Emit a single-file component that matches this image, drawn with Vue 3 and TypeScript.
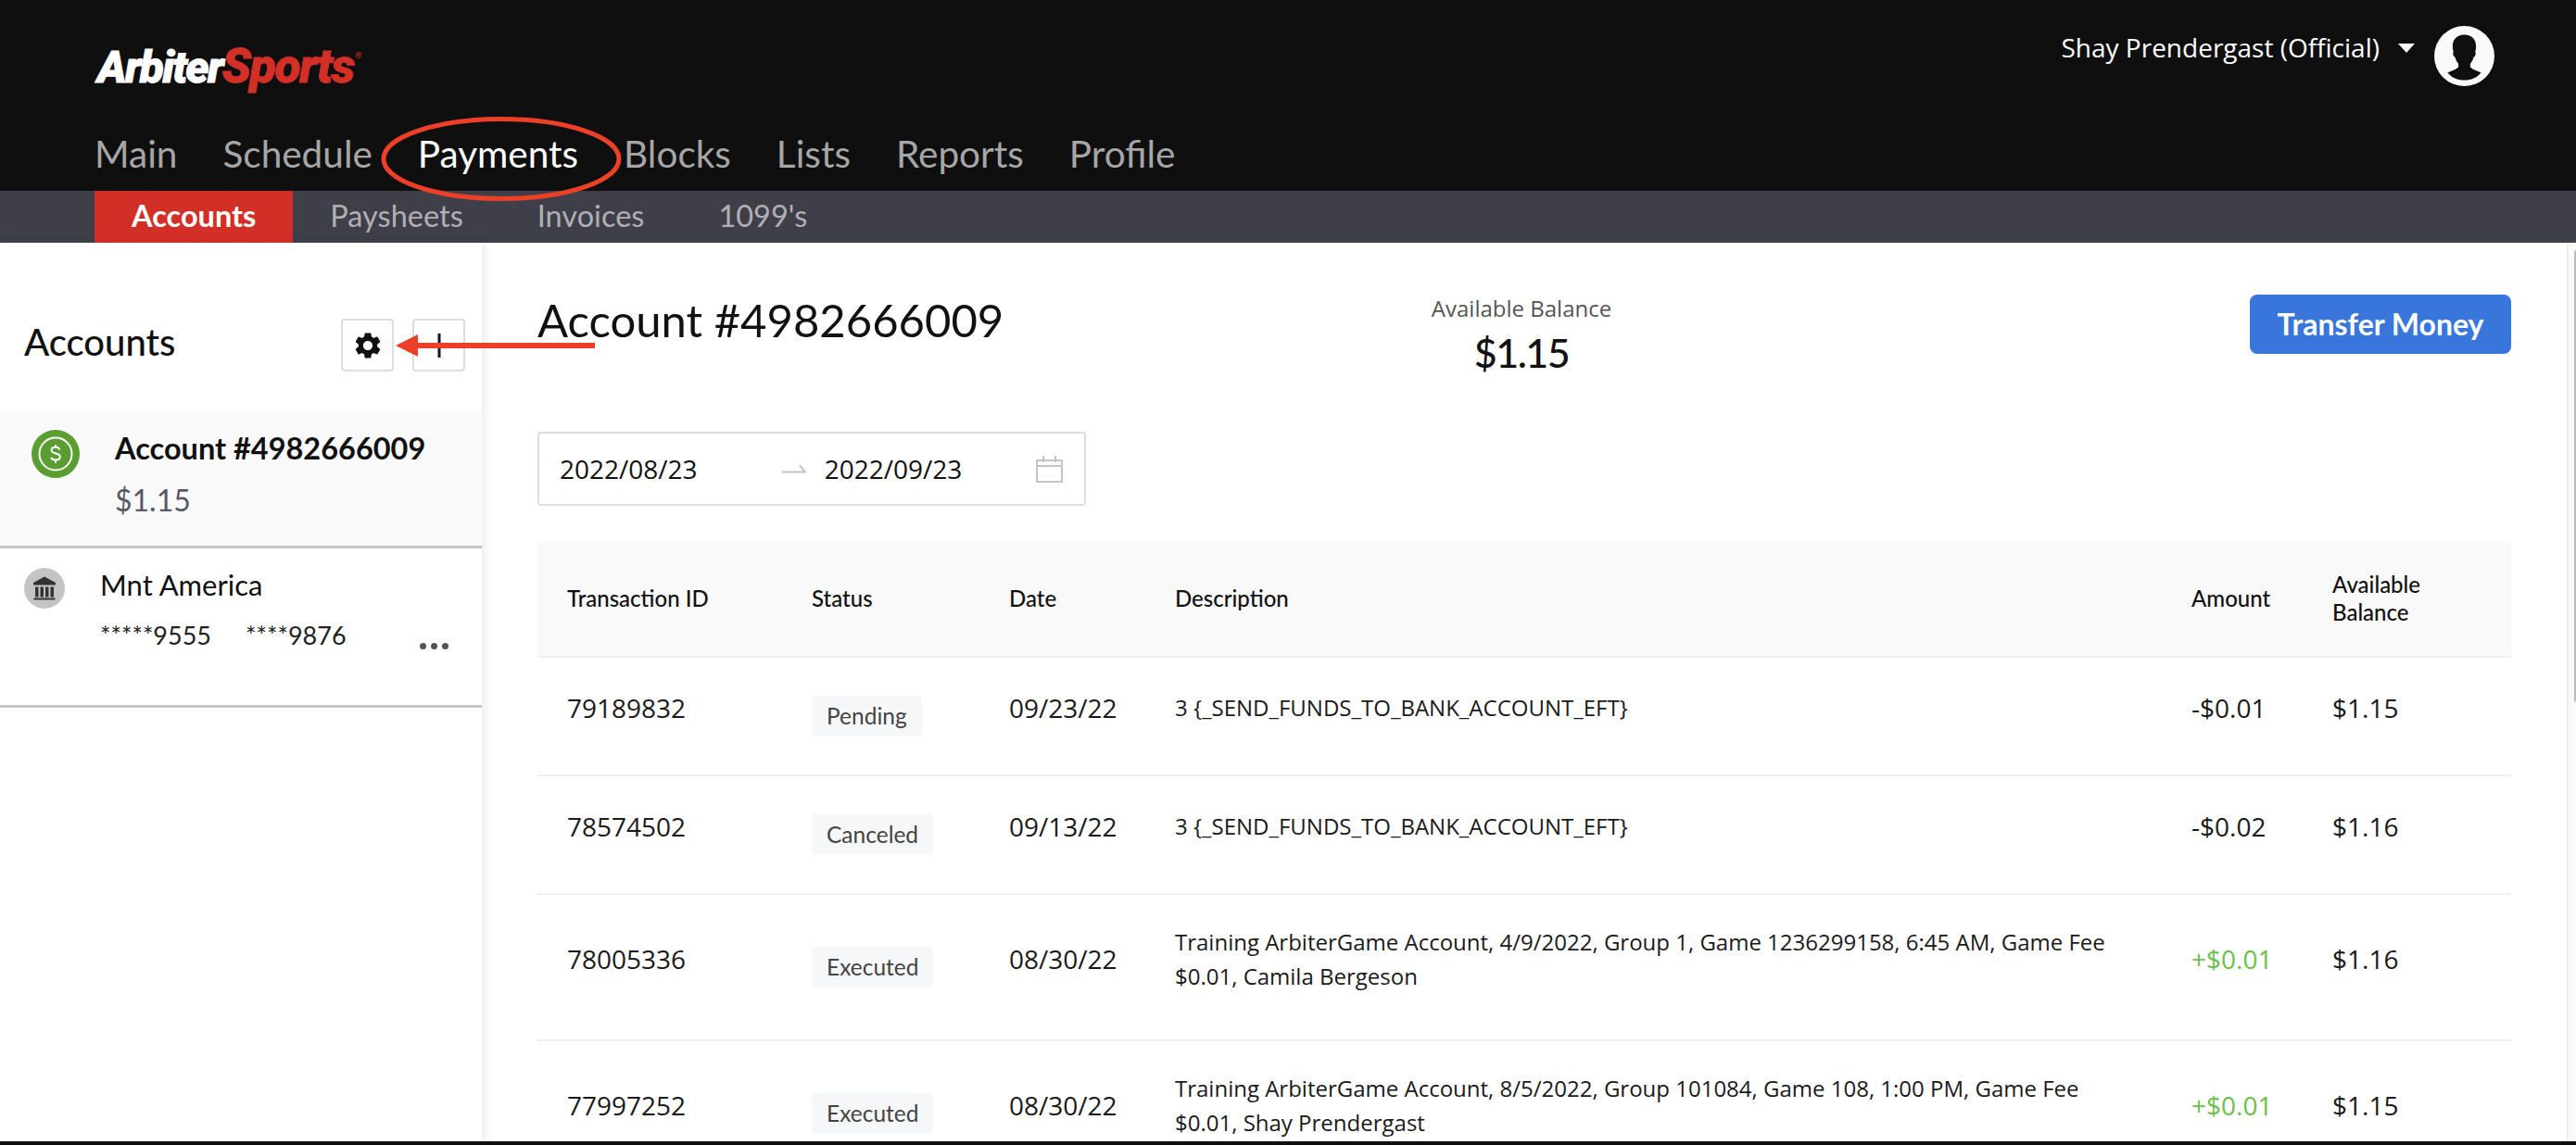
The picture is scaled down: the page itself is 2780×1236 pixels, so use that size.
<script setup lang="ts">
interface Txn {
  id: string
  status: string
  date: string
  desc: string[]
  amount: string
  balance: string
  tall?: boolean
}

const mainNav = ['Main', 'Schedule', 'Payments', 'Blocks', 'Lists', 'Reports', 'Profile']
const subNav = ['Accounts', 'Paysheets', 'Invoices', "1099's"]

const txns: Txn[] = [
  { id: '79189832', status: 'Pending', date: '09/23/22', desc: ['3 {_SEND_FUNDS_TO_BANK_ACCOUNT_EFT}'], amount: '-$0.01', balance: '$1.15' },
  { id: '78574502', status: 'Canceled', date: '09/13/22', desc: ['3 {_SEND_FUNDS_TO_BANK_ACCOUNT_EFT}'], amount: '-$0.02', balance: '$1.16' },
  {
    id: '78005336',
    status: 'Executed',
    date: '08/30/22',
    desc: ['Training ArbiterGame Account, 4/9/2022, Group 1, Game 1236299158, 6:45 AM, Game Fee', '$0.01, Camila Bergeson'],
    amount: '+$0.01',
    balance: '$1.16',
    tall: true,
  },
  {
    id: '77997252',
    status: 'Executed',
    date: '08/30/22',
    desc: ['Training ArbiterGame Account, 8/5/2022, Group 101084, Game 108, 1:00 PM, Game Fee', '$0.01, Shay Prendergast'],
    amount: '+$0.01',
    balance: '$1.15',
    tall: true,
  },
]
</script>

<template>
  <div class="page">
    <header class="top">
      <div class="top-row">
        <div class="logo"><span class="logo-a">Arbiter</span><span class="logo-s">Sports</span><span class="logo-r">®</span></div>
        <div class="user">
          <span class="user-name">Shay Prendergast (Official)</span>
          <span class="caret"></span>
          <svg class="avatar" viewBox="0 0 65 65">
            <circle cx="32.5" cy="32.5" r="32.5" fill="#fafafa" />
            <path
              d="M32.5 9.5c-8.5 0-13 5.5-12.6 13.5.1 2.2.6 4 1 5.2-1 .4-.8 2.6.2 4.4.5.9 1 1.1 1.4 1.2.7 3 2 5.200 3.600 7v3.800c-2.500 2.400-7.600 4-11.600 5.800 4.200 5.300 10.800 8.100 18 8.100s13.800-2.800 18-8.100c-4-1.800-9.100-3.400-11.600-5.800v-3.800c1.600-1.800 2.900-4 3.600-7 .4-.100.900-.300 1.400-1.200 1-1.800 1.200-4 .2-4.400.4-1.200.9-3 1-5.200.4-8-4.100-13.500-12.600-13.500z"
              fill="#0f0f10"
            />
          </svg>
        </div>
      </div>
      <nav class="main-nav">
        <a v-for="item in mainNav" :key="item" class="main-link" :class="{ active: item === 'Payments' }">{{ item }}</a>
      </nav>
    </header>
    <nav class="sub-nav">
      <a v-for="item in subNav" :key="item" class="sub-link" :class="{ active: item === 'Accounts' }">{{ item }}</a>
    </nav>

    <div class="body">
      <aside class="side">
        <div class="side-head">
          <h2 class="side-title">Accounts</h2>
          <button class="icon-btn">
            <svg viewBox="0 0 24 24" width="34" height="34">
              <path
                fill="#111"
                d="M19.14 12.94c.04-.3.06-.61.06-.94 0-.32-.02-.64-.07-.94l2.03-1.58c.18-.14.23-.41.12-.61l-1.92-3.32c-.12-.22-.37-.29-.59-.22l-2.39.96c-.5-.38-1.03-.7-1.62-.94l-.36-2.54c-.04-.24-.24-.41-.48-.41h-3.84c-.24 0-.43.17-.47.41l-.36 2.54c-.59.24-1.13.57-1.62.94l-2.39-.96c-.22-.08-.47 0-.59.22L2.74 8.87c-.12.21-.08.47.12.61l2.03 1.58c-.05.3-.09.63-.09.94s.02.64.07.94l-2.03 1.58c-.18.14-.23.41-.12.61l1.92 3.32c.12.22.37.29.59.22l2.39-.96c.5.38 1.03.7 1.62.94l.36 2.54c.05.24.24.41.48.41h3.84c.24 0 .44-.17.47-.41l.36-2.54c.59-.24 1.13-.56 1.62-.94l2.39.96c.22.08.47 0 .59-.22l1.92-3.32c.12-.22.07-.47-.12-.61l-2.01-1.58zM12 15.6c-1.98 0-3.6-1.62-3.6-3.6s1.62-3.6 3.6-3.6 3.6 1.62 3.6 3.6-1.62 3.6-3.6 3.6z"
              />
            </svg>
          </button>
          <button class="icon-btn">
            <svg viewBox="0 0 28 28" width="28" height="28">
              <path d="M14 1v26M1 14h26" stroke="#0d1b2a" stroke-width="3" fill="none" />
            </svg>
          </button>
        </div>

        <div class="acct selected">
          <svg class="acct-icon" viewBox="0 0 52 52" width="52" height="52">
            <circle cx="26" cy="26" r="26" fill="#5a9e32" />
            <circle cx="26" cy="26" r="17.500" fill="none" stroke="#fff" stroke-width="2" />
            <path
              d="M30.500 21.500c-.6-1.700-2.300-2.700-4.500-2.700-2.600 0-4.400 1.300-4.400 3.300 0 4.500 9.200 2.300 9.200 7 0 2.100-2 3.500-4.700 3.500-2.400 0-4.200-1-4.900-2.800M26 16v3M26 32.500v3.500"
              fill="none"
              stroke="#fff"
              stroke-width="2"
            />
          </svg>
          <div class="acct-text">
            <div class="acct-name">Account #4982666009</div>
            <div class="acct-bal">$1.15</div>
          </div>
        </div>

        <div class="acct bank">
          <svg class="bank-icon" viewBox="0 0 44 44" width="44" height="44">
            <circle cx="22" cy="22" r="22" fill="#c4c4c4" />
            <path
              fill="#333"
              d="M22 9.500 10 16v2.500h24V16zM12 20.500h3.500v11H12zM17.500 20.500H21v11h-3.500zM23 20.500h3.500v11H23zM28.500 20.500H32v11h-3.500zM10.500 32.500h23v2h-23z"
            />
          </svg>
          <div class="bank-text">
            <div class="bank-name">Mnt America</div>
            <div class="bank-nums"><span>*****9555</span><span>****9876</span></div>
          </div>
          <span class="dots"><i></i><i></i><i></i></span>
        </div>
      </aside>

      <main class="content">
        <div class="content-head">
          <h1 class="acct-title">Account #4982666009</h1>
          <div class="avail">
            <div class="avail-label">Available Balance</div>
            <div class="avail-value">$1.15</div>
          </div>
          <button class="transfer">Transfer Money</button>
        </div>

        <div class="range">
          <span class="range-date">2022/08/23</span>
          <svg class="range-arrow" viewBox="0 0 26 10" width="26" height="10">
            <path d="M0 8.500h25L19 1.500" fill="none" stroke="#c4c4c4" stroke-width="2" />
          </svg>
          <span class="range-date">2022/09/23</span>
          <svg class="range-cal" viewBox="0 0 29 30" width="29" height="30">
            <path d="M1 6h27v23H1zM1 12h27M8 1v7M21 1v7" fill="none" stroke="#c4c4c4" stroke-width="2" />
          </svg>
        </div>

        <div class="table">
          <div class="t-row t-head">
            <div>Transaction ID</div>
            <div>Status</div>
            <div>Date</div>
            <div>Description</div>
            <div>Amount</div>
            <div>Available<br />Balance</div>
          </div>
          <div v-for="t in txns" :key="t.id" class="t-row t-body" :class="{ tall: t.tall }">
            <div class="cell">{{ t.id }}</div>
            <div><span class="tag">{{ t.status }}</span></div>
            <div class="cell">{{ t.date }}</div>
            <div class="cell desc">
              <div v-for="line in t.desc" :key="line">{{ line }}</div>
            </div>
            <div class="cell" :class="{ plus: t.amount.startsWith('+') }">{{ t.amount }}</div>
            <div class="cell">{{ t.balance }}</div>
          </div>
        </div>
      </main>
      <div class="scroll"><div class="scroll-thumb"></div></div>
    </div>
    <div class="bottom-line"></div>

    <!-- red annotations drawn on top of the screenshot -->
    <svg class="marks" viewBox="0 0 2780 1236" width="2780" height="1236">
      <ellipse cx="541" cy="171.500" rx="127" ry="43" fill="none" stroke="#ee4027" stroke-width="5" />
      <path d="M642 373H445" stroke="#ee4027" stroke-width="6" fill="none" />
      <path d="M427 373l24-12v24z" fill="#ee4027" />
    </svg>
  </div>
</template>

<style>
html,
body {
  margin: 0;
  background: #fff;
}
</style>

<style scoped>
.page {
  position: relative;
  width: 2780px;
  height: 1236px;
  overflow: hidden;
  display: flex;
  flex-direction: column;
  font-family: Lato, 'Liberation Sans', sans-serif;
  color: #111;
}

.top {
  height: 206px;
  background: #0f0f10;
  padding: 0 88px 0 104px;
  box-sizing: border-box;
  display: flex;
  flex-direction: column;
  flex: none;
}

.top-row {
  display: flex;
  justify-content: space-between;
  align-items: flex-start;
  height: 137px;
}

.logo {
  margin-top: 32px;
  margin-left: 1px;
  font-family: Roboto, 'Liberation Sans', sans-serif;
  font-style: italic;
  font-weight: 900;
  line-height: 56px;
  white-space: nowrap;
}

.logo-a {
  color: #fff;
  font-size: 48px;
  letter-spacing: -1.800px;
  -webkit-text-stroke: 0.8px #fff;
}

.logo-s {
  color: #d22f27;
  font-size: 52px;
  letter-spacing: -1.600px;
  -webkit-text-stroke: 0.8px #d22f27;
}

.logo-r {
  color: #d22f27;
  font-size: 9px;
  vertical-align: 26px;
  margin-left: 1px;
}

.user {
  display: flex;
  align-items: flex-start;
  margin-top: 28px;
}

.user-name {
  font-family: 'Open Sans', sans-serif;
  font-size: 28px;
  line-height: 46px;
  color: #fff;
  white-space: nowrap;
}

.caret {
  width: 0;
  height: 0;
  margin: 19px 21px 0 20px;
  border-left: 9px solid transparent;
  border-right: 9px solid transparent;
  border-top: 10px solid #fafafa;
}

.avatar {
  width: 65px;
  height: 65px;
}

.main-nav {
  display: flex;
  gap: 49px;
  margin-left: -2px;
}

.main-link {
  font-size: 40.500px;
  line-height: 58px;
  color: #a6a6a6;
}

.main-link.active {
  color: #fff;
}

.sub-nav {
  height: 56px;
  flex: none;
  background: #3f3f49;
  padding-left: 102px;
  display: flex;
}

.sub-link {
  padding: 0 40px;
  font-size: 32.500px;
  line-height: 54px;
  color: #b0b0b4;
}

.sub-link.active {
  background: #d22f27;
  color: #fff;
  font-weight: 700;
}

.body {
  flex: 1;
  min-height: 0;
  display: flex;
}

.side {
  width: 520px;
  flex: none;
  box-shadow: 4px 0 10px rgba(0, 0, 0, 0.08);
  position: relative;
}

.side-head {
  height: 182px;
  box-sizing: border-box;
  padding: 82px 18px 0 26px;
  display: flex;
  align-items: flex-start;
}

.side-title {
  margin: 0 auto 0 0;
  font-size: 40px;
  font-weight: 500;
  line-height: 50px;
}

.icon-btn {
  width: 57px;
  height: 57px;
  padding: 0;
  margin-left: 20px;
  background: #fff;
  border: 2px solid #ddd;
  border-radius: 4px;
  display: flex;
  align-items: center;
  justify-content: center;
}

.acct {
  display: flex;
  box-sizing: border-box;
  border-bottom: 3px solid #c6c6c6;
}

.selected {
  height: 148px;
  background: #f9f9f9;
  padding: 20px 0 0 34px;
}

.acct-icon {
  flex: none;
}

.acct-text {
  margin-left: 38px;
}

.acct-name {
  font-size: 32.500px;
  font-weight: 700;
  line-height: 40px;
}

.acct-bal {
  margin-top: 16px;
  font-size: 32px;
  line-height: 40px;
  font-weight: 400;
  color: #555a66;
}

.bank {
  position: relative;
  height: 172px;
  padding: 21px 0 0 26px;
}

.bank-icon {
  flex: none;
}

.bank-text {
  margin-left: 38px;
  margin-top: -2px;
}

.bank-name {
  font-size: 31px;
  line-height: 40px;
}

.bank-nums {
  margin-top: 17px;
  display: flex;
  gap: 37px;
  font-size: 27px;
  line-height: 36px;
  color: #222;
}

.dots {
  position: absolute;
  right: 36px;
  top: 102px;
  display: flex;
  gap: 5px;
}

.dots i {
  width: 7px;
  height: 7px;
  border-radius: 50%;
  background: #555;
}

.content {
  flex: 1;
  min-width: 0;
  padding: 0 60px;
}

.content-head {
  height: 204px;
  display: flex;
  align-items: flex-start;
}

.acct-title {
  margin: 48px 0 0;
  width: 944px;
  flex: none;
  font-size: 49px;
  font-weight: 400;
  line-height: 70px;
  white-space: nowrap;
}

.avail {
  margin-top: 50px;
  width: 216px;
  flex: none;
  text-align: center;
  margin-left: 10px;
}

.avail-label {
  font-family: 'Open Sans', sans-serif;
  font-size: 24px;
  line-height: 42px;
  color: #555;
}

.avail-value {
  font-size: 43px;
  line-height: 54px;
  font-weight: 500;
  letter-spacing: -1.500px;
}

.transfer {
  margin: 56px 0 0 auto;
  width: 282px;
  height: 64px;
  padding: 0 0 2px;
  border: 0;
  border-radius: 8px;
  background: #3876dc;
  color: #fff;
  font-family: Lato, sans-serif;
  font-size: 32px;
  font-weight: 700;
}

.range {
  width: 592px;
  height: 80px;
  box-sizing: border-box;
  border: 2px solid #ddd;
  border-radius: 4px;
  display: flex;
  align-items: center;
  padding-left: 22px;
  font-family: 'Open Sans', sans-serif;
  font-size: 28px;
}

.range-arrow {
  margin: 0 20px 0 91px;
}

.range-cal {
  margin-left: 80px;
}

.table {
  margin-top: 38px;
}

.t-row {
  display: grid;
  grid-template-columns: 264px 213px 179px 1097px 152px 225px;
  align-items: center;
  border-bottom: 2px solid #f0f0f0;
}

.t-row > div {
  padding-left: 32px;
}

.t-head {
  height: 126px;
  box-sizing: border-box;
  background: #f9f9f9;
  font-size: 24px;
  line-height: 30px;
  font-weight: 500;
}

.t-body {
  height: 128px;
  box-sizing: border-box;
  font-family: 'Open Sans', sans-serif;
  font-size: 28px;
  color: #1a1a1a;
}

.t-body.tall {
  height: 158px;
}

.t-row .cell {
  padding-bottom: 19px;
}

.desc {
  font-size: 24px;
  line-height: 37px;
}

.plus {
  color: #6cc04a;
}

.tag {
  display: inline-block;
  padding: 0 16px;
  height: 44px;
  line-height: 44px;
  border-radius: 4px;
  background: #f6f7f9;
  font-family: Lato, sans-serif;
  font-size: 24.500px;
  color: #444;
}

.scroll {
  width: 8px;
  flex: none;
  background: #fafafa;
  border-left: 2px solid #eee;
  padding-top: 8px;
}

.scroll-thumb {
  margin-left: 6px;
  height: 488px;
  background: #bbb;
  border-radius: 2px 0 0 2px;
}

.bottom-line {
  position: absolute;
  left: 0;
  right: 0;
  bottom: 0;
  height: 4px;
  background: #0f0f10;
}

.marks {
  position: absolute;
  left: 0;
  top: 0;
  pointer-events: none;
}
</style>
